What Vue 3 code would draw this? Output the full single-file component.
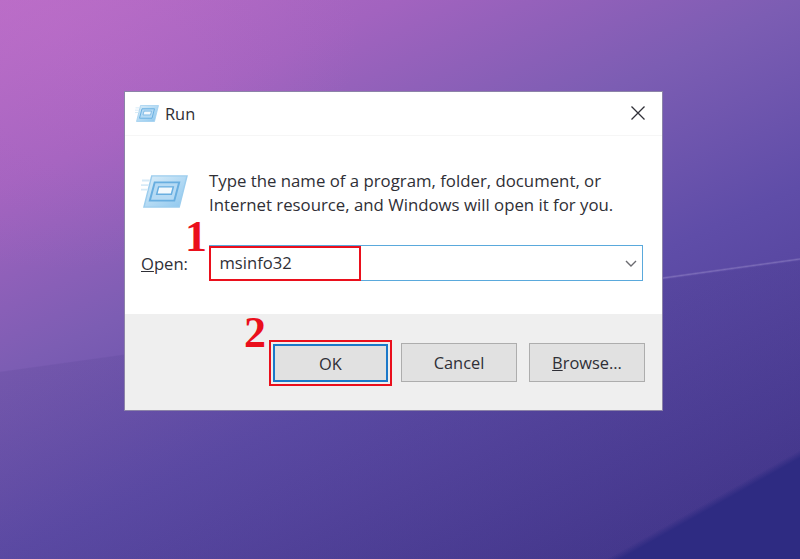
<script setup>
const message = ['Type the name of a program, folder, document, or', 'Internet resource, and Windows will open it for you.']
</script>

<template>
  <div class="stage">
    <div class="dialog">
      <header class="title">
        <svg class="icon small" viewBox="0 0 48 36" preserveAspectRatio="none"><use href="#run-icon" /></svg>
        <span>Run</span>
        <svg class="close" viewBox="0 0 16 16"><path d="M1.5 1.5 14.5 14.5M14.5 1.5 1.5 14.5" /></svg>
      </header>
      <section class="body">
        <div class="message">
          <svg class="icon large" viewBox="0 0 48 36" preserveAspectRatio="none">
            <defs>
              <linearGradient id="run-fill" x1="0" y1="0" x2="1" y2="1">
                <stop offset="0" stop-color="#dceef9" />
                <stop offset="1" stop-color="#8cc6ee" />
              </linearGradient>
              <g id="run-icon">
                <path d="M11 1H47L39 35H3Z" fill="url(#run-fill)" stroke="#9ccdee" stroke-width="1.5" />
                <path d="M1 6H9M0 11H8M0 16H7" stroke="#d6eaf7" stroke-width="2" />
                <path d="M14 8H39L34 28H9Z" fill="#b5daf4" stroke="#68aee0" stroke-width="2" />
                <path d="M18 13H33L31 21H16Z" fill="#f3f9fd" stroke="#68aee0" stroke-width="1.5" />
              </g>
            </defs>
            <use href="#run-icon" />
          </svg>
          <p>
            <span v-for="line in message" :key="line">{{ line }}</span>
          </p>
        </div>
        <div class="open-row">
          <label><u>O</u>pen:</label>
          <div class="combo">
            <div class="value">msinfo32</div>
            <svg class="chevron" viewBox="0 0 12 7"><path d="M1 1 6 6 11 1" /></svg>
          </div>
          <b class="mark one">1</b>
        </div>
      </section>
      <footer class="footer">
        <div class="ok-wrap">
          <button class="primary">OK</button>
          <b class="mark two">2</b>
        </div>
        <button>Cancel</button>
        <button><u>B</u>rowse...</button>
      </footer>
    </div>
  </div>
</template>

<style scoped>
.stage {
  width: 800px;
  height: 559px;
  box-sizing: border-box;
  padding: 91px 0 0 124px;
  overflow: hidden;
  background:
    linear-gradient(172.1deg, transparent 44%, rgba(225,215,245,.24) 47%, transparent 50%) right 0 top 255px / 137px 30px no-repeat,
    linear-gradient(150.6deg, transparent 89.2%, #2e2b82 90%),
    linear-gradient(172.1deg, transparent 55.4%, rgba(45,35,110,.1) 55.6%),
    radial-gradient(ellipse 300px 240px at 60px 30px, rgba(196,112,204,.32) 0, rgba(180,105,198,0) 100%),
    linear-gradient(155deg, #b86cc6 0, #a263bf 20%, #7c5db3 40%, #5f4da8 60%, #4f4098 80%, #3f3488 100%);
  font-family: "Open Sans", "Noto Sans", sans-serif;
  color: #2f2f36;
}
.dialog {
  width: 539px;
  height: 320px;
  box-sizing: border-box;
  border: 1px solid #8c83a8;
  background: #fff;
  display: flex;
  flex-direction: column;
}
.title {
  height: 44px;
  flex: none;
  box-sizing: border-box;
  padding: 0 16px 0 10px;
  display: flex;
  align-items: center;
  gap: 6px;
  font-size: 16.4px;
  border-bottom: 1px solid #f6f6f6;
}
.icon.small { width: 24px; height: 17px; }
.icon.large { width: 47px; height: 33px; flex: none; margin-top: 6px; }
.close {
  width: 16px;
  height: 16px;
  margin-left: auto;
  margin-top: -1px;
  fill: none;
  stroke: #303038;
  stroke-width: 1.3;
}
.body {
  flex: 1;
  padding: 33px 19px 0 16px;
  display: flex;
  flex-direction: column;
}
.message {
  display: flex;
  gap: 21px;
}
.message p {
  margin: 0;
  font-size: 16.8px;
  line-height: 24px;
  display: flex;
  flex-direction: column;
  white-space: nowrap;
}
.open-row {
  position: relative;
  margin-top: 28px;
  display: flex;
  align-items: center;
  height: 36px;
  font-size: 16.6px;
}
.open-row label { width: 68px; flex: none; }
.combo {
  flex: 1;
  height: 36px;
  box-sizing: border-box;
  border: 1.5px solid #5aa9dc;
  display: flex;
  align-items: center;
  justify-content: space-between;
  padding-right: 5px;
  position: relative;
}
.value {
  position: absolute;
  left: -1.5px;
  top: -0.5px;
  width: 152px;
  height: 35px;
  box-sizing: border-box;
  border: 2px solid #ea0f1c;
  padding-left: 9px;
  line-height: 29px;
}
.chevron {
  width: 12px;
  height: 7px;
  margin-left: auto;
  fill: none;
  stroke: #6b6b70;
  stroke-width: 1.4;
}
.mark {
  position: absolute;
  color: #ea0f1c;
  font-family: "Liberation Serif", serif;
  font-size: 44px;
  line-height: 1;
  font-weight: 700;
}
.one { left: 44px; top: -30px; }
.two { left: -27px; top: -31px; }
.footer {
  height: 96px;
  flex: none;
  box-sizing: border-box;
  background: #efefef;
  padding: 29px 17px 0 144px;
  display: flex;
  align-items: flex-start;
  gap: 12px;
}
.ok-wrap {
  position: relative;
  box-sizing: border-box;
  flex: none;
  width: 123px;
  height: 46px;
  margin: -3px -3px 0 0;
  padding: 2px;
  border: 2px solid #ea0f1c;
}
button {
  width: 116px;
  height: 39px;
  flex: none;
  box-sizing: border-box;
  border: 1.5px solid #adadad;
  background: #e1e1e1;
  color: #2f2f36;
  font: 16.4px "Open Sans", "Noto Sans", sans-serif;
  padding: 0;
}
.primary {
  display: block;
  width: 115px;
  height: 38px;
  border: 2px solid #1c78c8;
}
</style>
